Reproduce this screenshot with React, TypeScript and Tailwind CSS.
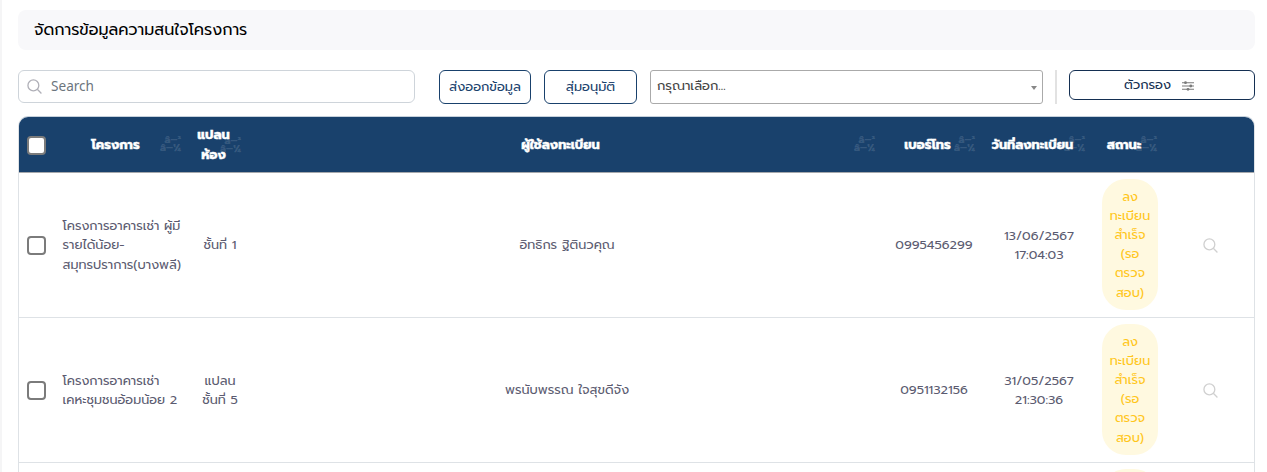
import React from "react";

type Header = { label: string[]; width: string; shift: string };
type Row = { project: string[]; plan: string[]; name: string; phone: string; date: string; time: string };

const headers: Header[] = [
  { label: ["โครงการ"], width: "w-[136px]", shift: "pr-[13px]" },
  { label: ["แปลน", "ห้อง"], width: "w-[60px]", shift: "pr-[13px]" },
  { label: ["ผู้ใช้ลงทะเบียน"], width: "w-[634px]", shift: "pr-[13px]" },
  { label: ["เบอร์โทร"], width: "w-[100px]", shift: "pr-[13px]" },
  { label: ["วันที่ลงทะเบียน"], width: "w-[110px]", shift: "pr-[13px]" },
  { label: ["สถานะ"], width: "w-[72px]", shift: "pr-[12px]" },
];

const rows: Row[] = [
  {
    project: ["โครงการอาคารเช่า ผู้มี", "รายได้น้อย-", "สมุทรปราการ(บางพลี)"],
    plan: ["ชั้นที่ 1"],
    name: "อิทธิกร ฐิตินวคุณ",
    phone: "0995456299",
    date: "13/06/2567",
    time: "17:04:03",
  },
  {
    project: ["โครงการอาคารเช่า", "เคหะชุมชนอ้อมน้อย 2"],
    plan: ["แปลน", "ชั้นที่ 5"],
    name: "พรนับพรรณ ใจสุขดีจัง",
    phone: "0951132156",
    date: "31/05/2567",
    time: "21:30:36",
  },
];

const statusLines = ["ลง", "ทะเบียน", "สำเร็จ", "(รอ", "ตรวจ", "สอบ)"];

function Lines({ items }: { items: string[] }) {
  return (
    <>
      {items.map((t, i) => (
        <span key={i} className="block whitespace-nowrap">{t}</span>
      ))}
    </>
  );
}

function SearchIcon({ className }: { className: string }) {
  return (
    <svg viewBox="0 0 16 16" className={className} fill="none" stroke="currentColor" strokeWidth="1.4">
      <circle cx="6.8" cy="6.8" r="5.8" />
      <path d="M11 11l4.4 4.4" />
    </svg>
  );
}

function FilterIcon() {
  return (
    <svg viewBox="0 0 12 10" className="h-[10px] w-[12px] text-[#7a7a7a]" fill="currentColor">
      <path d="M0 1.2h12v1H0zM0 4.5h12v1H0zM0 7.8h12v1H0z" />
      <circle cx="3.5" cy="1.7" r="1.4" />
      <circle cx="8.8" cy="5" r="1.4" />
      <circle cx="6" cy="8.3" r="1.4" />
    </svg>
  );
}

function Check() {
  return <span className="block h-[19px] w-[19px] rounded-[4px] border-2 border-[#7b7b7b] bg-white" />;
}

function Status() {
  return (
    <div className="mb-[2px] flex h-[131px] w-[56px] flex-col items-center rounded-[24px] bg-[#fff9e0] pt-[8px] text-center text-[12.8px] leading-[19.2px] text-[#ffc61a]">
      <Lines items={statusLines} />
    </div>
  );
}

export default function App() {
  return (
    <div className="h-[472px] w-[1267px] overflow-hidden border-l-2 border-[#f5f5f6] bg-white pl-4 pt-[10px] font-['Prompt','Noto_Sans_Thai',sans-serif]">
      <div className="flex h-10 w-[1237px] items-center rounded-lg bg-[#f8f8fa] px-4 text-base text-black">
        จัดการข้อมูลความสนใจโครงการ
      </div>

      <div className="mt-5 flex h-[46px] w-[1237px] items-start text-[13px]">
        <div className="flex h-[33px] w-[397px] items-center rounded-md border border-[#ced4da] pl-2 text-[#6c757d]">
          <SearchIcon className="h-[15px] w-[15px] text-[#b0b0b8]" />
          <span className="ml-[9px] font-['Noto_Sans'] text-[13.6px]">Search</span>
        </div>
        <button className="ml-6 h-[34px] w-[92px] whitespace-nowrap rounded-md border border-[#19416c] text-[#19416c]">ส่งออกข้อมูล</button>
        <button className="ml-[13px] h-[34px] w-[93px] whitespace-nowrap rounded-md border border-[#19416c] text-[#19416c]">สุ่มอนุมัติ</button>
        <div className="ml-[13px] flex h-[34px] w-[393px] items-center justify-between rounded-[3px] border border-[#aaa] pl-[6px] pr-[5px] text-[#444]">
          <span className="pb-[2px]">กรุณาเลือก...</span>
          <span className="mt-[2px] h-0 w-0 border-x-[3px] border-t-[4px] border-x-transparent border-t-[#888]" />
        </div>
        <span className="ml-3 h-[34px] w-[2px] bg-[#e2e2e2]" />
        <button className="ml-3 flex h-[30px] w-[186px] items-center justify-center rounded-md border border-[#142f52] pr-[6px] text-[#142f52]">
          ตัวกรอง
          <span className="ml-[11px] mt-[2px]"><FilterIcon /></span>
        </button>
      </div>

      <div className="h-[400px] w-[1237px] overflow-hidden rounded-t-[10px] border border-b-0 border-[#dee2e6] border-t-[#c5d0db]">
        <div className="flex h-[56px] items-center border-b border-[#a5a8ac] bg-[#19416c] text-[12.8px] font-bold text-white">
          <div className="w-[35px] pl-[8px] pt-px"><Check /></div>
          {headers.map((h) => (
            <div key={h.label[0]} className={`relative ${h.width} ${h.shift} text-center leading-[19.2px] [-webkit-text-stroke:0.4px_white]`}>
              <Lines items={h.label} />
              <span className="absolute right-[9px] top-1/2 flex -translate-y-1/2 flex-col items-end text-[10.5px] font-bold leading-[8px] text-white/15 [-webkit-text-stroke:0px]">
                <span>â–²</span>
                <span>â–¼</span>
              </span>
            </div>
          ))}
        </div>
        {rows.map((r) => (
          <div key={r.phone} className="flex h-[145px] items-center border-b border-[#dee2e6] text-center text-[12.8px] leading-[19.2px] text-[#5b5b70]">
            <div className="w-[35px] pl-[8px] pt-px"><Check /></div>
            <div className="w-[136px] pl-[8.5px] text-left"><Lines items={r.project} /></div>
            <div className="w-[60px]"><Lines items={r.plan} /></div>
            <div className="w-[634px]">{r.name}</div>
            <div className="w-[100px]">{r.phone}</div>
            <div className="w-[110px]"><Lines items={[r.date, r.time]} /></div>
            <div className="flex w-[72px] justify-center"><Status /></div>
            <div className="flex w-[88px] justify-center"><SearchIcon className="h-[15px] w-[15px] text-[#d0d0d0]" /></div>
          </div>
        ))}
        <div className="flex h-[145px] items-center">
          <div className="ml-[1075px] flex w-[72px] justify-center"><Status /></div>
        </div>
      </div>
    </div>
  );
}
